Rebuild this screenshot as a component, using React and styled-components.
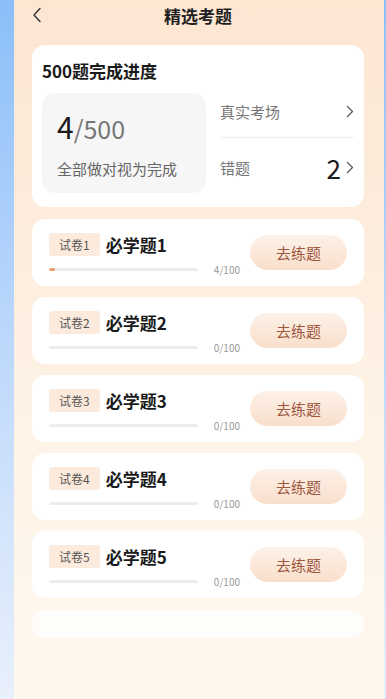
import styled, { createGlobalStyle } from 'styled-components'

const GlobalStyle = createGlobalStyle`
  html, body {
    margin: 0;
    padding: 0;
  }
  body {
    font-family: "Noto Sans CJK SC", "Noto Sans", sans-serif;
    background: linear-gradient(180deg, #8bbff9 0%, #b9d6fb 45%, #e9f0fc 100%);
    min-height: 699px;
  }
`;

const Phone = styled.div`
  margin-left: 14px;
  width: 370px;
  height: 699px;
  box-sizing: border-box;
  padding: 0 20px 0 18px;
  background: linear-gradient(180deg, #fde6d2 0%, #fdecdc 30%, #fef3e6 60%, #fff8ef 100%);
  overflow: hidden;
`;

const Header = styled.div`
  position: relative;
  height: 32px;
  display: flex;
  align-items: center;
  justify-content: center;
`;

const BackBtn = styled.svg`
  position: absolute;
  left: 0;
  top: 7px;
`;

const Title = styled.div`
  font-size: 17px;
  font-weight: 600;
  color: #1f1f1f;
  margin-top: -2px;
`;

const Card = styled.div`
  background: #ffffff;
  border-radius: 13px;
  box-sizing: border-box;
`;

const ProgressCard = styled(Card)`
  margin-top: 13px;
  height: 162px;
  padding: 15px 10px 14px 10px;
`;

const CardTitle = styled.div`
  font-size: 17px;
  font-weight: 700;
  color: #1a1a1a;
  line-height: 22px;
  margin-bottom: 11px;
`;

const ProgressBody = styled.div`
  display: flex;
  gap: 14px;
`;

const CountBox = styled.div`
  width: 164px;
  height: 100px;
  background: #f6f6f6;
  border-radius: 13px;
  box-sizing: border-box;
  padding: 16px 15px 0 15px;
`;

const CountLine = styled.div`
  display: flex;
  align-items: baseline;
  line-height: 34px;
`;

const Done = styled.span`
  font-size: 30px;
  color: #1a1a1a;
`;

const Total = styled.span`
  font-size: 25px;
  color: #777;
`;

const CountHint = styled.div`
  margin-top: 13px;
  font-size: 15px;
  color: #666;
`;

const LinkList = styled.div`
  flex: 1;
  display: flex;
  flex-direction: column;
`;

const LinkRow = styled.div`
  display: flex;
  align-items: center;
  height: ${p => p.h}px;
  padding-top: ${p => p.pt || 0}px;
  padding-bottom: ${p => p.pb || 0}px;
  border-bottom: ${p => (p.divider ? '1px solid #eeeeee' : 'none')};
  box-sizing: border-box;
`;

const LinkLabel = styled.div`
  flex: 1;
  font-size: 15px;
  color: #777;
`;

const LinkCount = styled.div`
  font-size: 26px;
  color: #1a1a1a;
  line-height: 30px;
  margin-right: 5px;
`;

const Chevron = ({ color = '#555' }) => (
  <svg width="8" height="13" viewBox="0 0 8 13">
    <path d="M1.5 1.5 L6.5 6.5 L1.5 11.5" fill="none" stroke={color} strokeWidth="1.2" strokeLinecap="round" strokeLinejoin="round" />
  </svg>
);

const List = styled.div`
  margin-top: 12px;
  display: flex;
  flex-direction: column;
  gap: 11px;
`;

const PaperCard = styled(Card)`
  height: 67px;
  padding: 14px 17px 10px 17px;
  display: flex;
  align-items: flex-start;
`;

const PaperInfo = styled.div`
  width: 191px;
  display: flex;
  flex-direction: column;
  gap: 6px;
`;

const PaperHead = styled.div`
  display: flex;
  align-items: center;
  height: 23px;
`;

const Tag = styled.span`
  background: #fcebdd;
  color: #555;
  font-size: 12px;
  height: 23px;
  line-height: 23px;
  padding: 0 10px;
  border-radius: 3px;
`;

const PaperName = styled.span`
  margin-left: 6px;
  font-size: 17px;
  font-weight: 700;
  color: #1a1a1a;
`;

const PaperFoot = styled.div`
  display: flex;
  align-items: center;
  height: 14px;
`;

const Track = styled.div`
  width: 149px;
  height: 3px;
  border-radius: 2px;
  background: #ececec;
  overflow: hidden;
`;

const Fill = styled.div`
  height: 100%;
  background: #f0a266;
  border-radius: 2px;
`;

const Score = styled.span`
  margin-left: auto;
  font-size: 10px;
  color: #999;
`;

const PracticeBtn = styled.button`
  margin-left: auto;
  margin-top: 2px;
  width: 97px;
  height: 35px;
  border: none;
  border-radius: 18px;
  background: linear-gradient(180deg, #fdf1e8 0%, #f9dfcc 100%);
  color: #9c573f;
  font-family: inherit;
  font-size: 15px;
  padding: 0;
`;

const GhostCard = styled(Card)`
  margin-top: 12px;
  height: 28px;
  background: rgba(255, 255, 255, 0.75);
`;

const papers = [
  { id: 1, done: 4 },
  { id: 2, done: 0 },
  { id: 3, done: 0 },
  { id: 4, done: 0 },
  { id: 5, done: 0 },
];

export default function App() {
  return (
    <>
      <GlobalStyle />
      <Phone>
        <Header>
          <BackBtn width="10" height="16" viewBox="0 0 10 16">
            <path d="M8 1.5 L2 8 L8 14.5" fill="none" stroke="#333" strokeWidth="1.4" strokeLinecap="round" strokeLinejoin="round" />
          </BackBtn>
          <Title>精选考题</Title>
        </Header>

        <ProgressCard>
          <CardTitle>500题完成进度</CardTitle>
          <ProgressBody>
            <CountBox>
              <CountLine>
                <Done>4</Done>
                <Total>/500</Total>
              </CountLine>
              <CountHint>全部做对视为完成</CountHint>
            </CountBox>
            <LinkList>
              <LinkRow h={45} pb={7} divider>
                <LinkLabel>真实考场</LinkLabel>
                <Chevron />
              </LinkRow>
              <LinkRow h={55} pt={4}>
                <LinkLabel>错题</LinkLabel>
                <LinkCount>2</LinkCount>
                <Chevron />
              </LinkRow>
            </LinkList>
          </ProgressBody>
        </ProgressCard>

        <List>
          {papers.map(p => (
            <PaperCard key={p.id}>
              <PaperInfo>
                <PaperHead>
                  <Tag>试卷{p.id}</Tag>
                  <PaperName>必学题{p.id}</PaperName>
                </PaperHead>
                <PaperFoot>
                  <Track>
                    <Fill style={{ width: `${p.done}%` }} />
                  </Track>
                  <Score>{p.done}/100</Score>
                </PaperFoot>
              </PaperInfo>
              <PracticeBtn>去练题</PracticeBtn>
            </PaperCard>
          ))}
        </List>

        <GhostCard />
      </Phone>
    </>
  );
}
